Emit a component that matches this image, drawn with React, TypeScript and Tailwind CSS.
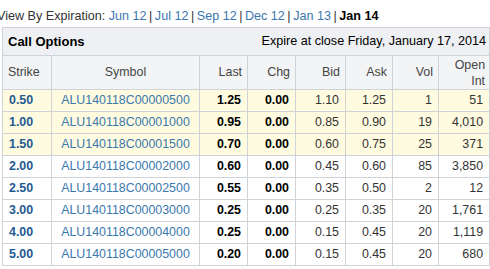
const expirations = ['Jun 12', 'Jul 12', 'Sep 12', 'Dec 12', 'Jan 13'];

interface Row {
  strike: string;
  symbol: string;
  last: string;
  chg: string;
  bid: string;
  ask: string;
  vol: string;
  openInt: string;
  itm: boolean;
}

const rows: Row[] = [
  { strike: '0.50', symbol: 'ALU140118C00000500', last: '1.25', chg: '0.00', bid: '1.10', ask: '1.25', vol: '1', openInt: '51', itm: true },
  { strike: '1.00', symbol: 'ALU140118C00001000', last: '0.95', chg: '0.00', bid: '0.85', ask: '0.90', vol: '19', openInt: '4,010', itm: true },
  { strike: '1.50', symbol: 'ALU140118C00001500', last: '0.70', chg: '0.00', bid: '0.60', ask: '0.75', vol: '25', openInt: '371', itm: true },
  { strike: '2.00', symbol: 'ALU140118C00002000', last: '0.60', chg: '0.00', bid: '0.45', ask: '0.60', vol: '85', openInt: '3,850', itm: false },
  { strike: '2.50', symbol: 'ALU140118C00002500', last: '0.55', chg: '0.00', bid: '0.35', ask: '0.50', vol: '2', openInt: '12', itm: false },
  { strike: '3.00', symbol: 'ALU140118C00003000', last: '0.25', chg: '0.00', bid: '0.25', ask: '0.35', vol: '20', openInt: '1,761', itm: false },
  { strike: '4.00', symbol: 'ALU140118C00004000', last: '0.25', chg: '0.00', bid: '0.15', ask: '0.45', vol: '20', openInt: '1,119', itm: false },
  { strike: '5.00', symbol: 'ALU140118C00005000', last: '0.20', chg: '0.00', bid: '0.15', ask: '0.45', vol: '20', openInt: '680', itm: false },
];

const cell = 'border border-[#cfd2d6] px-[6px] h-[22px] leading-none';
const head = 'border border-[#cfd2d6] font-normal';

const App = () => {
  return (
    <div className="w-[490px] h-[269px] overflow-hidden bg-white text-[12.4px] text-[#333] font-['Liberation_Sans',Arial,sans-serif]">
      <div className="h-[27px] pt-[10px] -ml-[3px] whitespace-nowrap leading-none text-[12.6px]">
        View By Expiration:{' '}
        {expirations.map((e) => (
          <span key={e}>
            <span className="text-[#3a76ae]">{e}</span>
            <span className="text-[#333] mx-[2.5px]">|</span>
          </span>
        ))}
        <span className="font-bold text-black">Jan 14</span>
      </div>

      <table className="ml-[2px] w-[487px] border-collapse table-fixed">
        <colgroup>
          <col className="w-[49px]" />
          <col className="w-[148px]" />
          <col className="w-[48px]" />
          <col className="w-[48px]" />
          <col className="w-[50px]" />
          <col className="w-[47px]" />
          <col className="w-[46px]" />
          <col className="w-[51px]" />
        </colgroup>
        <thead>
          <tr className="bg-[#eef0f3] h-[28px]">
            <th colSpan={3} className="border border-[#cfd2d6] border-r-0 text-left font-bold text-black text-[13px] px-[5px]">
              Call Options
            </th>
            <th colSpan={5} className="border border-[#cfd2d6] border-l-0 text-right font-normal text-black text-[12.6px] pr-[3px] whitespace-nowrap">
              Expire at close Friday, January 17, 2014
            </th>
          </tr>
          <tr className="bg-[#f3f4f6] h-[34px] text-[#444]">
            <th className={`${head} text-left px-[5px]`}>Strike</th>
            <th className={`${head} text-center`}>Symbol</th>
            <th className={`${head} text-right px-[5px]`}>Last</th>
            <th className={`${head} text-right px-[5px]`}>Chg</th>
            <th className={`${head} text-right px-[5px]`}>Bid</th>
            <th className={`${head} text-right px-[5px]`}>Ask</th>
            <th className={`${head} text-right px-[5px]`}>Vol</th>
            <th className={`${head} text-right px-[4px] leading-[16px]`}>
              Open
              <br />
              Int
            </th>
          </tr>
        </thead>
        <tbody>
          {rows.map((r) => (
            <tr key={r.symbol} className={r.itm ? 'bg-[#fffbe0]' : 'bg-white'}>
              <td className={`${cell} text-left font-bold text-[#1f5a93] px-[5px]`}>{r.strike}</td>
              <td className={`${cell} text-center text-[#3a78ad]`}>{r.symbol}</td>
              <td className={`${cell} text-right font-bold text-black px-[5px]`}>{r.last}</td>
              <td className={`${cell} text-right font-bold text-black px-[5px]`}>{r.chg}</td>
              <td className={`${cell} text-right px-[5px]`}>{r.bid}</td>
              <td className={`${cell} text-right px-[5px]`}>{r.ask}</td>
              <td className={`${cell} text-right px-[5px]`}>{r.vol}</td>
              <td className={`${cell} text-right px-[4px]`}>{r.openInt}</td>
            </tr>
          ))}
        </tbody>
      </table>
    </div>
  );
};

export default App;
